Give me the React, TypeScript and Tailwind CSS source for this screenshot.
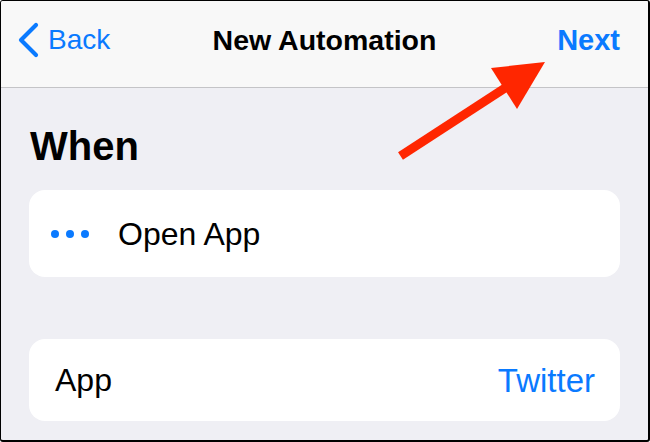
import React from 'react';

const font = { fontFamily: '"Liberation Sans", Arial, sans-serif' };

export default function App() {
  return (
    <div
      className="relative w-[650px] h-[442px] overflow-hidden bg-[#efeff4] border-t border-l border-r-2 border-b-2 border-black rounded-[3px] flex flex-col"
      style={font}
    >
      {/* Nav bar */}
      <div className="h-[87px] shrink-0 bg-[#f8f8f8] border-b border-[#c4c4c7] grid grid-cols-[1fr_auto_1fr] items-center pb-[8px]">
        <div className="flex items-center pl-[16px] text-[#0a7aff]">
          <svg width="22" height="36" viewBox="0 0 22 36" className="shrink-0">
            <path d="M19 3 L4 18 L19 33" fill="none" stroke="#0a7aff" strokeWidth="4.2" strokeLinecap="round" strokeLinejoin="round" />
          </svg>
          <span className="ml-[9px] text-[28px] leading-none">Back</span>
        </div>
        <div className="text-[28.5px] leading-none font-bold text-black">New Automation</div>
        <div className="flex justify-end pr-[28px]">
          <span className="text-[29px] leading-none font-bold text-[#0a7aff]">Next</span>
        </div>
      </div>

      {/* Content */}
      <div className="flex-1 px-[28px] pt-[38px]">
        <h1 className="text-[40px] leading-none font-bold text-black pl-[1px]">When</h1>

        <div className="mt-[24px] h-[87px] bg-white rounded-[16px] flex items-center pl-[22px]">
          <div className="flex items-center gap-[7px]">
            <span className="w-[8px] h-[8px] rounded-full bg-[#0a7aff]" />
            <span className="w-[8px] h-[8px] rounded-full bg-[#0a7aff]" />
            <span className="w-[8px] h-[8px] rounded-full bg-[#0a7aff]" />
          </div>
          <span className="ml-[29px] text-[32px] leading-none text-black">Open App</span>
        </div>

        <div className="mt-[62px] h-[82px] bg-white rounded-[16px] flex items-center justify-between pl-[26px] pr-[25px]">
          <span className="text-[32px] leading-none text-black">App</span>
          <span className="text-[33px] leading-none text-[#0a7aff]">Twitter</span>
        </div>
      </div>

      {/* Red annotation arrow */}
      <svg className="absolute left-0 top-0 pointer-events-none" width="650" height="442" viewBox="0 0 650 442">
        <line x1="399.5" y1="155" x2="506" y2="85.7" stroke="#ff2600" strokeWidth="9" />
        <polygon points="544,61 490,67 516,108" fill="#ff2600" />
      </svg>
    </div>
  );
}
